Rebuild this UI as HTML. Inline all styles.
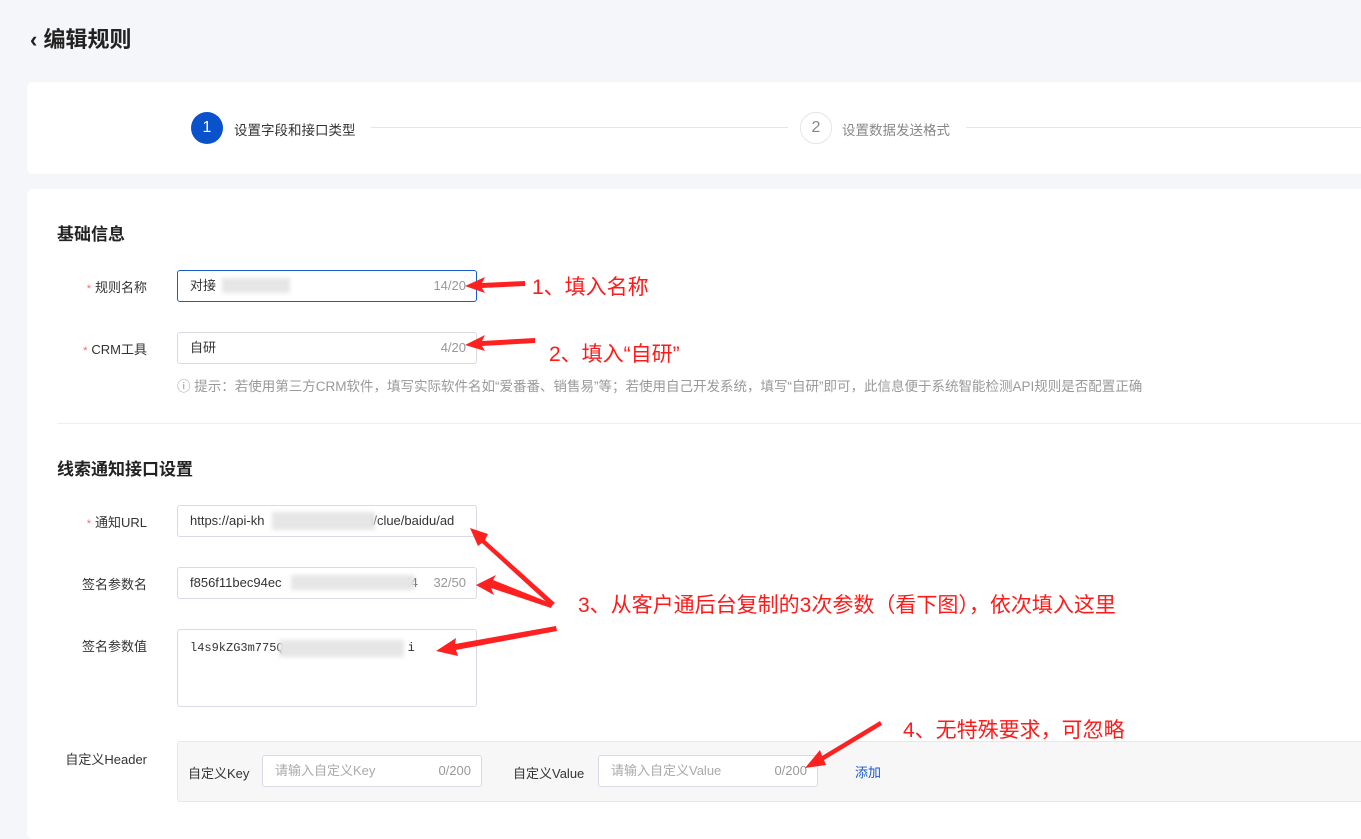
<!DOCTYPE html>
<html><head><meta charset="utf-8"><style>
body{margin:0;width:1361px;height:822px;background:#f5f6f9;font-family:"Liberation Sans","Noto Sans CJK SC",sans-serif;position:relative;overflow:hidden;color:#333}
.a{position:absolute;white-space:nowrap}
.card{position:absolute;background:#fff;border-radius:6px}
.inp{position:absolute;border:1px solid #d8dbe3;border-radius:3px;background:#fff;box-sizing:border-box;font-size:13px;color:#333}
.inp .t{position:absolute;left:12px;top:0;line-height:30px}
.inp .c{position:absolute;right:10px;top:0;line-height:30px;color:#999}
.lab{position:absolute;font-size:13px;color:#333;text-align:right;width:120px}
.lab b{color:#f56c6c;font-weight:normal;font-size:11px;margin-right:4px}
.blur{position:absolute;background:#e6e6e6;filter:blur(2px)}
.red{position:absolute;color:#ff1a1a;font-size:21px;white-space:nowrap}
</style></head><body>
<div class="a" style="left:30px;top:22px;font-size:22px;font-weight:bold;color:#222">‹ 编辑规则</div>
<div class="card" style="left:27px;top:82px;width:1350px;height:92px"></div>
<div class="a" style="left:191px;top:112px;width:32px;height:32px;border-radius:50%;background:#0a52cc;color:#fff;text-align:center;line-height:32px;font-size:16px">1</div>
<div class="a" style="left:234px;top:119px;font-size:13.5px;color:#333">设置字段和接口类型</div>
<div class="a" style="left:371px;top:127px;width:417px;height:1px;background:#e3e5ea"></div>
<div class="a" style="left:800px;top:112px;width:30px;height:30px;border-radius:50%;border:1px solid #e3e5ea;color:#888;text-align:center;line-height:30px;font-size:16px">2</div>
<div class="a" style="left:842px;top:119px;font-size:13.5px;color:#888">设置数据发送格式</div>
<div class="a" style="left:966px;top:127px;width:400px;height:1px;background:#e3e5ea"></div>
<div class="card" style="left:27px;top:189px;width:1350px;height:650px"></div>
<div class="a" style="left:57px;top:220px;font-size:17px;font-weight:bold;color:#222">基础信息</div>
<div class="lab" style="left:27px;top:277px"><b>*</b>规则名称</div>
<div class="inp" style="left:177px;top:270px;width:300px;height:32px;border:1.5px solid #1a5acc"><span class="t">对接</span><span class="c">14/20</span></div>
<div class="blur" style="left:222px;top:278px;width:68px;height:15px"></div>
<div class="lab" style="left:27px;top:339px"><b>*</b>CRM工具</div>
<div class="inp" style="left:177px;top:332px;width:300px;height:32px"><span class="t">自研</span><span class="c">4/20</span></div>
<div class="a" style="left:177px;top:375px;font-size:13.5px;color:#999">ⓘ 提示：若使用第三方CRM软件，填写实际软件名如“爱番番、销售易”等；若使用自己开发系统，填写“自研”即可，此信息便于系统智能检测API规则是否配置正确</div>
<div class="a" style="left:57px;top:423px;width:1310px;height:1px;background:#eceef2"></div>
<div class="a" style="left:57px;top:455px;font-size:17px;font-weight:bold;color:#222">线索通知接口设置</div>
<div class="lab" style="left:27px;top:512px"><b>*</b>通知URL</div>
<div class="inp" style="left:177px;top:505px;width:300px;height:32px"><span class="t">https://api-kh<span style="display:inline-block;width:106px"></span>i/clue/baidu/ad</span></div>
<div class="blur" style="left:272px;top:512px;width:103px;height:18px"></div>
<div class="lab" style="left:27px;top:574px">签名参数名</div>
<div class="inp" style="left:177px;top:567px;width:300px;height:32px"><span class="t">f856f11bec94ec<span style="display:inline-block;width:126px"></span>l4</span><span class="c">32/50</span></div>
<div class="blur" style="left:291px;top:575px;width:124px;height:15px"></div>
<div class="lab" style="left:27px;top:636px">签名参数值</div>
<div class="inp" style="left:177px;top:629px;width:300px;height:78px"><span class="t" style="font-family:'Liberation Mono',monospace;font-size:12px;top:3px">l4s9kZG3m775Q<span style="display:inline-block;width:124px"></span>i</span></div>
<div class="blur" style="left:279px;top:640px;width:125px;height:17px"></div>
<div class="lab" style="left:27px;top:749px">自定义Header</div>
<div class="a" style="left:177px;top:741px;width:1200px;height:59px;background:#f7f7f8;border:1px solid #e6e7eb;border-radius:3px"></div>
<div class="a" style="left:188px;top:763px;font-size:13px">自定义Key</div>
<div class="inp" style="left:262px;top:755px;width:220px;height:32px;color:#aaa"><span class="t">请输入自定义Key</span><span class="c">0/200</span></div>
<div class="a" style="left:513px;top:763px;font-size:13px">自定义Value</div>
<div class="inp" style="left:598px;top:755px;width:220px;height:32px;color:#aaa"><span class="t">请输入自定义Value</span><span class="c">0/200</span></div>
<div class="a" style="left:855px;top:762px;font-size:13px;color:#1a5acc">添加</div>
<svg class="a" style="left:0;top:0" width="1361" height="822">
<g fill="#ff2020">
<polygon points="525,281 482,283 485,277 465,286 485,293 482,288 525,286"/>
<polygon points="535,338 482,341 485,335 465,345 485,351 482,346 535,343"/>
<polygon points="555,603 485,540 488,534 470,528 478,546 482,543 551,606"/>
<polygon points="553,604 493,580 496,575 476,585 494,595 491,588 551,608"/>
<polygon points="556,626 455,644 456,638 436,651 458,656 456,650 557,631"/>
<polygon points="880,721 822,756 820,750 805,768 826,765 824,760 882,725"/>
</g>
</svg>
<div class="red" style="left:532px;top:271px">1、填入名称</div>
<div class="red" style="left:549px;top:338px">2、填入“自研”</div>
<div class="red" style="left:578px;top:589px">3、从客户通后台复制的3次参数（看下图），依次填入这里</div>
<div class="red" style="left:903px;top:714px">4、无特殊要求，可忽略</div>
</body></html>
